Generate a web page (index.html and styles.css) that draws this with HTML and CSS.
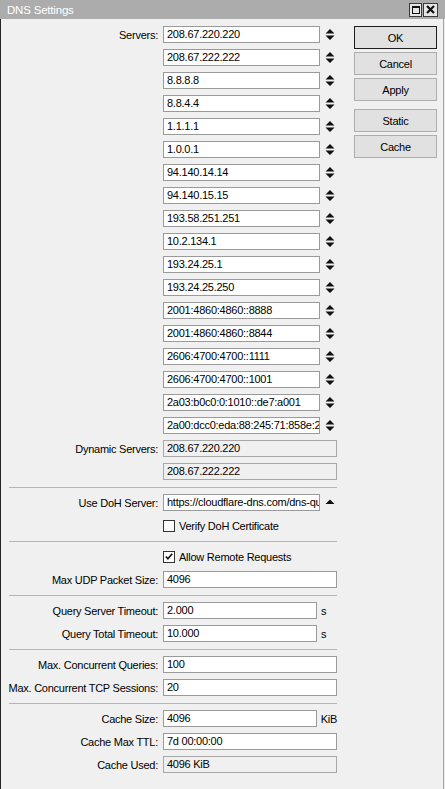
FILE: index.html
```html
<!DOCTYPE html>
<html>
<head>
<meta charset="utf-8">
<title>DNS Settings</title>
<link rel="stylesheet" href="styles.css">
</head>
<body>
<div class="window">
  <div class="titlebar">
    <span class="title">DNS Settings</span>
    <div class="tb-buttons">
      <span class="tb-btn max"><span class="max-glyph"></span></span>
      <span class="tb-btn close"><svg width="9" height="9" viewBox="0 0 9 9"><path d="M1 1L8 8M8 1L1 8" stroke="#111" stroke-width="2.2" fill="none"/></svg></span>
    </div>
  </div>
  <div class="content">
    <div class="form">
      <div class="row"><span class="label">Servers:</span><div class="field"><div class="input w-spin">208.67.220.220</div><svg class="spin" width="10" height="11" viewBox="0 0 10 11"><path d="M0.5 4.5L5 0L9.5 4.5Z M0.5 6.5L9.5 6.5L5 11Z" fill="#111"/></svg></div></div>
      <div class="row"><span class="label"></span><div class="field"><div class="input w-spin">208.67.222.222</div><svg class="spin" width="10" height="11" viewBox="0 0 10 11"><path d="M0.5 4.5L5 0L9.5 4.5Z M0.5 6.5L9.5 6.5L5 11Z" fill="#111"/></svg></div></div>
      <div class="row"><span class="label"></span><div class="field"><div class="input w-spin">8.8.8.8</div><svg class="spin" width="10" height="11" viewBox="0 0 10 11"><path d="M0.5 4.5L5 0L9.5 4.5Z M0.5 6.5L9.5 6.5L5 11Z" fill="#111"/></svg></div></div>
      <div class="row"><span class="label"></span><div class="field"><div class="input w-spin">8.8.4.4</div><svg class="spin" width="10" height="11" viewBox="0 0 10 11"><path d="M0.5 4.5L5 0L9.5 4.5Z M0.5 6.5L9.5 6.5L5 11Z" fill="#111"/></svg></div></div>
      <div class="row"><span class="label"></span><div class="field"><div class="input w-spin">1.1.1.1</div><svg class="spin" width="10" height="11" viewBox="0 0 10 11"><path d="M0.5 4.5L5 0L9.5 4.5Z M0.5 6.5L9.5 6.5L5 11Z" fill="#111"/></svg></div></div>
      <div class="row"><span class="label"></span><div class="field"><div class="input w-spin">1.0.0.1</div><svg class="spin" width="10" height="11" viewBox="0 0 10 11"><path d="M0.5 4.5L5 0L9.5 4.5Z M0.5 6.5L9.5 6.5L5 11Z" fill="#111"/></svg></div></div>
      <div class="row"><span class="label"></span><div class="field"><div class="input w-spin">94.140.14.14</div><svg class="spin" width="10" height="11" viewBox="0 0 10 11"><path d="M0.5 4.5L5 0L9.5 4.5Z M0.5 6.5L9.5 6.5L5 11Z" fill="#111"/></svg></div></div>
      <div class="row"><span class="label"></span><div class="field"><div class="input w-spin">94.140.15.15</div><svg class="spin" width="10" height="11" viewBox="0 0 10 11"><path d="M0.5 4.5L5 0L9.5 4.5Z M0.5 6.5L9.5 6.5L5 11Z" fill="#111"/></svg></div></div>
      <div class="row"><span class="label"></span><div class="field"><div class="input w-spin">193.58.251.251</div><svg class="spin" width="10" height="11" viewBox="0 0 10 11"><path d="M0.5 4.5L5 0L9.5 4.5Z M0.5 6.5L9.5 6.5L5 11Z" fill="#111"/></svg></div></div>
      <div class="row"><span class="label"></span><div class="field"><div class="input w-spin">10.2.134.1</div><svg class="spin" width="10" height="11" viewBox="0 0 10 11"><path d="M0.5 4.5L5 0L9.5 4.5Z M0.5 6.5L9.5 6.5L5 11Z" fill="#111"/></svg></div></div>
      <div class="row"><span class="label"></span><div class="field"><div class="input w-spin">193.24.25.1</div><svg class="spin" width="10" height="11" viewBox="0 0 10 11"><path d="M0.5 4.5L5 0L9.5 4.5Z M0.5 6.5L9.5 6.5L5 11Z" fill="#111"/></svg></div></div>
      <div class="row"><span class="label"></span><div class="field"><div class="input w-spin">193.24.25.250</div><svg class="spin" width="10" height="11" viewBox="0 0 10 11"><path d="M0.5 4.5L5 0L9.5 4.5Z M0.5 6.5L9.5 6.5L5 11Z" fill="#111"/></svg></div></div>
      <div class="row"><span class="label"></span><div class="field"><div class="input w-spin">2001:4860:4860::8888</div><svg class="spin" width="10" height="11" viewBox="0 0 10 11"><path d="M0.5 4.5L5 0L9.5 4.5Z M0.5 6.5L9.5 6.5L5 11Z" fill="#111"/></svg></div></div>
      <div class="row"><span class="label"></span><div class="field"><div class="input w-spin">2001:4860:4860::8844</div><svg class="spin" width="10" height="11" viewBox="0 0 10 11"><path d="M0.5 4.5L5 0L9.5 4.5Z M0.5 6.5L9.5 6.5L5 11Z" fill="#111"/></svg></div></div>
      <div class="row"><span class="label"></span><div class="field"><div class="input w-spin">2606:4700:4700::1111</div><svg class="spin" width="10" height="11" viewBox="0 0 10 11"><path d="M0.5 4.5L5 0L9.5 4.5Z M0.5 6.5L9.5 6.5L5 11Z" fill="#111"/></svg></div></div>
      <div class="row"><span class="label"></span><div class="field"><div class="input w-spin">2606:4700:4700::1001</div><svg class="spin" width="10" height="11" viewBox="0 0 10 11"><path d="M0.5 4.5L5 0L9.5 4.5Z M0.5 6.5L9.5 6.5L5 11Z" fill="#111"/></svg></div></div>
      <div class="row"><span class="label"></span><div class="field"><div class="input w-spin">2a03:b0c0:0:1010::de7:a001</div><svg class="spin" width="10" height="11" viewBox="0 0 10 11"><path d="M0.5 4.5L5 0L9.5 4.5Z M0.5 6.5L9.5 6.5L5 11Z" fill="#111"/></svg></div></div>
      <div class="row"><span class="label"></span><div class="field"><div class="input w-spin">2a00:dcc0:eda:88:245:71:858e:2</div><svg class="spin" width="10" height="11" viewBox="0 0 10 11"><path d="M0.5 4.5L5 0L9.5 4.5Z M0.5 6.5L9.5 6.5L5 11Z" fill="#111"/></svg></div></div>
      <div class="row"><span class="label">Dynamic Servers:</span><div class="field"><div class="input ro w-full">208.67.220.220</div></div></div>
      <div class="row"><span class="label"></span><div class="field"><div class="input ro w-full">208.67.222.222</div></div></div>

      <div class="sep"></div>

      <div class="row"><span class="label">Use DoH Server:</span><div class="field"><div class="input w-spin">https://cloudflare-dns.com/dns-query</div><svg class="spin" width="10" height="11" viewBox="0 0 10 11"><path d="M0.5 7L5 2.5L9.5 7Z" fill="#111"/></svg></div></div>
      <div class="row"><span class="label"></span><div class="field"><span class="cb"></span><span class="cb-label">Verify DoH Certificate</span></div></div>

      <div class="sep"></div>

      <div class="row"><span class="label"></span><div class="field"><span class="cb"><svg width="11" height="11" viewBox="0 0 11 11"><path d="M2 5.5L4.3 8L9 2.5" stroke="#111" stroke-width="1.8" fill="none"/></svg></span><span class="cb-label">Allow Remote Requests</span></div></div>
      <div class="row"><span class="label">Max UDP Packet Size:</span><div class="field"><div class="input w-full">4096</div></div></div>

      <div class="sep"></div>

      <div class="row"><span class="label">Query Server Timeout:</span><div class="field"><div class="input w-unit">2.000</div><span class="unit">s</span></div></div>
      <div class="row"><span class="label">Query Total Timeout:</span><div class="field"><div class="input w-unit">10.000</div><span class="unit">s</span></div></div>

      <div class="sep"></div>

      <div class="row"><span class="label">Max. Concurrent Queries:</span><div class="field"><div class="input w-full">100</div></div></div>
      <div class="row"><span class="label">Max. Concurrent TCP Sessions:</span><div class="field"><div class="input w-full">20</div></div></div>

      <div class="sep"></div>

      <div class="row"><span class="label">Cache Size:</span><div class="field"><div class="input w-unit">4096</div><span class="unit">KiB</span></div></div>
      <div class="row"><span class="label">Cache Max TTL:</span><div class="field"><div class="input w-full">7d 00:00:00</div></div></div>
      <div class="row"><span class="label">Cache Used:</span><div class="field"><div class="input ro w-full">4096 KiB</div></div></div>
    </div>
    <div class="buttons">
      <div class="btn default">OK</div>
      <div class="btn">Cancel</div>
      <div class="btn">Apply</div>
      <div class="btn group-start">Static</div>
      <div class="btn">Cache</div>
    </div>
  </div>
</div>
</body>
</html>
```

FILE: styles.css
```css
html, body {
  margin: 0;
  padding: 0;
  background: #f0f0f0;
}

body {
  font-family: "Liberation Sans", Arial, sans-serif;
  font-size: 11px;
  letter-spacing: -0.25px;
  color: #000;
}

.window {
  width: 445px;
  height: 789px;
  display: flex;
  flex-direction: column;
  overflow: hidden;
  background: #f0f0f0;
}

.titlebar {
  height: 19px;
  flex: none;
  display: flex;
  align-items: center;
  padding-left: 7px;
  background: #acacac;
}

.title {
  color: #fff;
  font-size: 11.5px;
  letter-spacing: -0.2px;
}

.tb-buttons {
  margin-left: auto;
  margin-right: 7px;
  display: flex;
  gap: 1px;
}

.tb-btn {
  height: 14px;
  box-sizing: border-box;
  border: 1px solid #3a3a3a;
  background: #e6e6e6;
  display: flex;
  align-items: center;
  justify-content: center;
}

.tb-btn.max {
  width: 13px;
}

.tb-btn.close {
  width: 15px;
}

.max-glyph {
  width: 8px;
  height: 8px;
  box-sizing: border-box;
  border: 1px solid #111;
  border-top-width: 2px;
}

.content {
  flex: 1;
  display: flex;
  align-items: flex-start;
  padding-top: 4px;
  border-left: 1px solid #262626;
  border-right: 1px solid #a3a3a3;
  margin-right: 1px;
}

.form {
  width: 336px;
  flex: none;
}

.row {
  display: grid;
  grid-template-columns: 157px 174px;
  column-gap: 5px;
  height: 23px;
  align-items: center;
}

.label {
  text-align: right;
  white-space: nowrap;
}

.field {
  display: flex;
  align-items: center;
  white-space: nowrap;
}

.input {
  height: 17px;
  box-sizing: border-box;
  border: 1px solid #9a9a9a;
  background: #fff;
  padding: 0 3px;
  line-height: 15px;
  overflow: hidden;
  white-space: nowrap;
}

.input.ro {
  background: #f0f0f0;
  border-color: #a8a8a8;
}

.w-spin {
  width: 157px;
}

.w-full {
  width: 174px;
}

.w-unit {
  width: 154px;
}

.spin {
  margin-left: 5px;
  flex: none;
}

.unit {
  margin-left: 4px;
}

.cb {
  width: 12px;
  height: 12px;
  box-sizing: border-box;
  border: 1px solid #333;
  background: #fff;
  display: flex;
  align-items: center;
  justify-content: center;
  flex: none;
}

.cb-label {
  margin-left: 4px;
}

.sep {
  height: 0;
  border-top: 1px solid #b6b6b6;
  margin: 4px 0 3px 8px;
}

.buttons {
  width: 83px;
  margin-left: 17px;
  padding-top: 3px;
  display: flex;
  flex-direction: column;
  gap: 3px;
}

.btn {
  height: 23px;
  box-sizing: border-box;
  border: 1px solid #adadad;
  background: #e1e1e1;
  display: flex;
  align-items: center;
  justify-content: center;
}

.btn.default {
  border-color: #1e1e1e;
}

.btn.group-start {
  margin-top: 5px;
}
```
